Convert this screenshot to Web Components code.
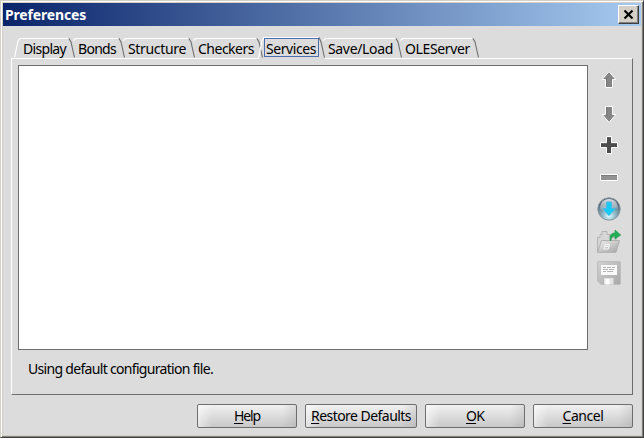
<!DOCTYPE html>
<html lang="en"><head><meta charset="utf-8"><title>Preferences</title>
<style>html,body{margin:0;width:644px;height:438px;overflow:hidden}body{font:14px "Noto Sans","Open Sans",sans-serif;color:#000}</style></head><body>
<pref-window></pref-window>
<script>
class Base extends HTMLElement{
  constructor(){super();this.attachShadow({mode:'open'})}
  connectedCallback(){this.shadowRoot.innerHTML=this.view();this.ready()}
  ready(){}
}
// Single-line label whose tracking is adjusted to fill a given width.
customElements.define('fit-label',class extends Base{
  view(){return `<style>:host{display:block;white-space:nowrap;line-height:20px;height:20px;width:${this.getAttribute('w')}px}span{display:inline-block}u{text-decoration-thickness:1px;text-underline-offset:2px;text-decoration-skip-ink:none}</style><span></span>`}
  ready(){
    const s=this.shadowRoot.querySelector('span'),t=this.getAttribute('text');
    s.innerHTML=this.hasAttribute('key')?`<u>${t[0]}</u>${t.slice(1)}`:t;
    const d=+this.getAttribute('w')-s.getBoundingClientRect().width;
    s.style.letterSpacing=d/t.length+'px';
  }
});
customElements.define('pref-tab',class extends Base{
  view(){
    const w=+this.getAttribute('w'),a=this.hasAttribute('active'),f=this.hasAttribute('first');
    const top=a?.5:1.5;
    const left=(a||f)?`M.5 ${a?21.5:20.5}L4 4L6 ${top}`:`M3.5 3.5L5.5 1.5`;
    return `<style>:host{display:block;position:relative;width:${w}px;height:22px;flex:none}
    svg{position:absolute;left:0;top:0;overflow:visible}
    .t{position:absolute;left:${f?9:8}px;top:2px}
    .f{position:absolute;left:6px;top:1px;width:53px;height:17px;border:1px solid #4c6eb0}</style>
    <svg width="${w+6}" height="22" fill="none"><path d="${left}H${w-2}" stroke="#fff" stroke-width="1.2"/><path d="M${w-1} ${top}L${w+1} 5L${w+4.5} 20.5" stroke="#6e6e6e" stroke-width="1.1"/>${a?`<path d="M1 21.5H${w+5}" stroke="#dcdcdc"/>`:''}</svg>${a?'<div class="f"></div>':''}
    <fit-label class="t" w="${this.getAttribute('tw')}" text="${this.getAttribute('text')}"></fit-label>`}
});
customElements.define('push-button',class extends Base{
  view(){return `<style>:host{box-sizing:border-box;display:flex;justify-content:center;align-items:center;width:${this.getAttribute('w')}px;height:24px;border:1px solid #6e6e6e;border-radius:2px;background:linear-gradient(90deg,#fff8 0,#fff0 14px,#fff0 calc(100% - 14px),#8883 100%),linear-gradient(#f1f1f1,#c8c8c8)}fit-label{margin-top:-1px}</style><fit-label key w="${this.getAttribute('tw')}" text="${this.getAttribute('text')}"></fit-label>`}
});
const icons={
up:`<path d="M12 2.6L18.8 10.5H15.5V18.5H8.5V10.5H5.2Z" fill="#858585" stroke="#fff"/><path d="M9.5 9v9" stroke="#777"/>`,
down:`<path d="M12 21.4L18.8 13.5H15.5V5.5H8.5V13.5H5.2Z" fill="#858585" stroke="#fff"/><path d="M9.5 6v9" stroke="#777"/>`,
plus:`<path d="M9.5 3.5h5v6h6v5h-6v6h-5v-6h-6v-5h6Z" fill="#4c4c4c" stroke="#fff"/><path d="M10 4.5h4M4 10.5h6M14 10.5h6" stroke="#666"/>`,
minus:`<path d="M3.5 9.5h17v6h-17Z" fill="#929292" stroke="#fff"/><path d="M4 10.5h16" stroke="#7c7c7c"/>`,
web:`<defs><radialGradient id="g" cy=".8" r=".65"><stop stop-color="#e4fbff"/><stop offset=".4" stop-color="#94bfcb"/><stop offset="1" stop-color="#4f6579"/></radialGradient><linearGradient id="h" x2="0" y2="1"><stop stop-color="#fff" stop-opacity=".8"/><stop offset="1" stop-color="#fff" stop-opacity=".15"/></linearGradient></defs><circle cx="12" cy="12" r="11.2" fill="url(#g)" stroke="#8b979f"/><path d="M3 12C3 5.5 6.5 2 12 2S21 5.5 21 12Q17 9.5 12 12T3 12" fill="url(#h)"/><path d="M9.5 5h5v6.5h4L12 18.8L5.5 11.5h4Z" fill="#17cbf8" stroke="#4fb5de" stroke-width=".8"/>`,
open:`<defs><linearGradient id="o" x2="1" y2="1"><stop stop-color="#eee"/><stop offset="1" stop-color="#a4a4a4"/></linearGradient></defs><path d="M.5 22.5V8.5H3V5.5H5V2.5h5v3h3v3h6V12" fill="#d6d6d6" stroke="#b4b4b4"/><path d="M.5 23.3L4.5 11.5H22.5L19 23.3Z" fill="url(#o)" stroke="#b0b0b0"/><path d="M8 15.5h4.5l-1.3 4.5h-4.5ZM8 17.5h4" fill="none" stroke="#f8f8f8"/><path d="M13 11.5C12.5 6 14 4 18 4V1L23.8 6L18 10V7.2C15.5 7 14.5 8 14 11.5Z" fill="#22b055" stroke="#16883c" stroke-width=".5"/>`,
save:`<defs><linearGradient id="s" x2="1" y2="1"><stop stop-color="#d0d0d0"/><stop offset=".5" stop-color="#bcbcbc"/><stop offset="1" stop-color="#a8a8a8"/></linearGradient></defs><path d="M.5 1.5Q.5.5 1.5.5H22.5Q23.5.5 23.5 1.5V22.5Q23.5 23.5 22.5 23.5H4L.5 20Z" fill="url(#s)" stroke="#bebebe"/><path d="M4 4H20V14H4Z" fill="#f9f9f9"/><path d="M6 6.5h3m1 0h4m1 0h3M6 8.5h5m1 0h5M6 10.5h3m1 0h6" stroke="#b4b4b4"/><path d="M7 17h9.5v6.5H7Z" fill="#e4e4e4"/><path d="M8.5 18h4v5.5h-4Z" fill="#fff"/>`};
customElements.define('tool-icon',class extends Base{view(){return `<style>:host{display:block;width:24px;height:24px}svg{display:block}</style><svg width="24" height="24" fill="none">${icons[this.getAttribute('name')]}</svg>`}});
customElements.define('title-bar',class extends Base{view(){return `<style>:host{box-sizing:border-box;display:flex;justify-content:space-between;height:23px;padding:2px 2px 0 2px;background:linear-gradient(90deg,#0a246a,#a6caf0);color:#fff;font-weight:700;font-size:14px}
.x{box-sizing:border-box;width:21px;height:19px;background:#d4d0c8;border:1px solid;border-color:#fff #404040 #404040 #fff;box-shadow:inset -1px -1px #808080}svg{display:block}</style><fit-label w="81" text="Preferences"></fit-label><div class="x"><svg width="19" height="17"><path d="M5.5 4.5L13.5 12.5M13.5 4.5L5.5 12.5" stroke="#000" stroke-width="2.1"/></svg></div>`}});
customElements.define('pref-window',class extends Base{view(){
const tabs=[['Display',56,43,'first'],['Bonds',50,38,''],['Structure',70,58,''],['Checkers',68,56,''],['Services',62,50,'active'],['Save/Load',77,65,''],['OLEServer',77,65,'']];
const btns=[['Help',100,26],['Restore Defaults',112,100],['OK',100,18],['Cancel',100,41]];
return `<style>:host{box-sizing:border-box;display:block;width:644px;height:438px;background:#dcdcdc;border:1px solid;border-color:#d4d0c8 #404040 #404040 #d4d0c8;box-shadow:inset 1px 1px #fff,inset -1px -1px #808080,inset 2px 2px #d4d0c8,inset -2px -2px #d4d0c8;padding:2px}
.tabs{display:flex;height:22px;margin:11px 0 0 11px;position:relative;z-index:1}
.panel{box-sizing:border-box;margin:-1px 0 0 8px;width:622px;height:337px;border:1px solid;border-color:#fff #6e6e6e #6e6e6e #fff;padding:6px}
.row{display:flex;gap:9px}.list{box-sizing:border-box;width:570px;height:285px;background:#fff;border:1px solid #6e6e6e}
.tools{display:grid;gap:8px;padding-top:4px;align-content:start}
.note{margin:9px 0 0 10px}.buttons{display:flex;gap:8px;margin:9px 0 0 194px}</style>
<title-bar></title-bar>
<div class="tabs">${tabs.map(t=>`<pref-tab text="${t[0]}" w="${t[1]}" tw="${t[2]}" ${t[3]}></pref-tab>`).join('')}</div>
<div class="panel"><div class="row"><div class="list"></div><div class="tools">${Object.keys(icons).map(n=>`<tool-icon name="${n}"></tool-icon>`).join('')}</div></div>
<fit-label class="note" w="185" text="Using default configuration file."></fit-label></div>
<div class="buttons">${btns.map(b=>`<push-button text="${b[0]}" w="${b[1]}" tw="${b[2]}"></push-button>`).join('')}</div>`}});
</script></body></html>
